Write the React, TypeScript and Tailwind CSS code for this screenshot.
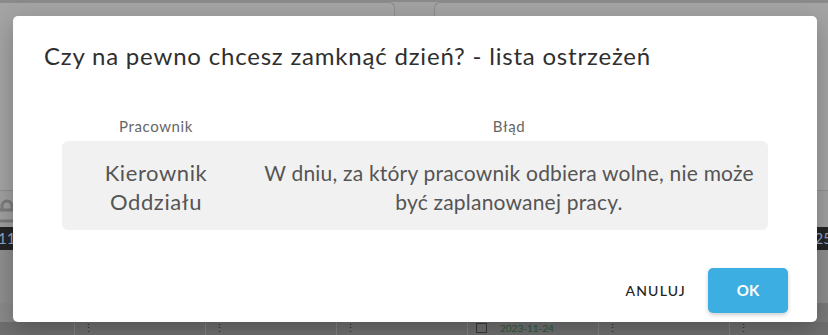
import { Lock } from "lucide-react";

const columns = ["Pracownik", "Błąd"];

const warnings = [
  {
    id: "w1",
    employee: "Kierownik Oddziału",
    message: "W dniu, za który pracownik odbiera wolne, nie może być zaplanowanej pracy.",
  },
];

function Backdrop() {
  return (
    <div className="flex h-full flex-col">
      <div className="h-[2px] bg-[#8a8a8a]" />
      <div className="flex h-[188px]">
        <div className="w-[395px] rounded-tr-[6px] border-r border-t border-[#8c8c8c] bg-[#a4a4a4]" />
        <div className="ml-[39px] flex-1 rounded-tl-[6px] border-l border-t border-[#8c8c8c] bg-[#a4a4a4]" />
      </div>
      <div className="h-[37px] border-t border-[#8e8e8e] bg-[#a0a0a0] pt-[8px]">
        <Lock className="ml-[-5px] h-[24px] w-[24px] text-[#7c7c7c]" strokeWidth={3} />
      </div>
      <div className="flex h-[23px] items-center justify-between bg-[#242424] text-[15px] text-[#8fa6c8]">
        <span className="ml-[-2px]">11</span>
        <span className="mr-[-4px]">25</span>
      </div>
      <div className="h-[53px] bg-[#8e8e8e]" />
      <div className="h-[19px] bg-gradient-to-r from-[#8a8a8a] via-[#7c7c7c] to-[#7a7a7a]" />
      <div className="flex h-[13px] bg-[#707070] pl-[74px]">
        {[0, 1, 2, 3, 4, 5].map((i) => (
          <div
            key={i}
            className="flex w-[131px] shrink-0 items-start border-l border-[#838383] pl-[8px] text-[11px] leading-[12px] text-[#2a2a2a]"
          >
            {i === 3 ? (
              <span className="flex items-center gap-[13px]">
                <span className="h-[10px] w-[11px] border border-[#3a3a3a]" />
                <span className="text-[10px] text-[#2f5a3a]">2023-11-24</span>
              </span>
            ) : (
              <span>⋮</span>
            )}
          </div>
        ))}
      </div>
    </div>
  );
}

export default function App() {
  return (
    <div className="relative h-[335px] w-[828px] overflow-hidden bg-[#a2a2a2] font-['Lato',sans-serif]">
      <Backdrop />

      <div className="absolute left-[13px] top-[16px] flex h-[306px] w-[804px] flex-col rounded-[5px] bg-white shadow-[0_8px_24px_rgba(0,0,0,0.25)]">
        <h2 className="pl-[31px] pt-[27px] text-[24px] leading-[26px] tracking-[0.8px] text-[#2f2f2f]">
          Czy na pewno chcesz zamknąć dzień? - lista ostrzeżeń
        </h2>

        <div className="mx-[49px] mt-[47px]">
          <div className="grid grid-cols-[188px_1fr] text-center text-[15px] leading-[20px] tracking-[0.6px] text-[#666]">
            {columns.map((col) => (
              <span key={col}>{col}</span>
            ))}
          </div>

          {warnings.map((w) => (
            <div
              key={w.id}
              className="mt-[5px] grid grid-cols-[188px_1fr] rounded-[6px] bg-[#f1f1f1] text-center leading-[29px] text-[#555]"
            >
              <div className="px-[20px] pb-[14px] pt-[17px] text-[22px] tracking-[0.6px]">{w.employee}</div>
              <div className="px-[9px] pb-[14px] pt-[17px] text-[21px] tracking-[0.2px]">{w.message}</div>
            </div>
          ))}
        </div>

        <div className="mt-auto flex items-center justify-end gap-[14px] pb-[9px] pr-[29px]">
          <button
            type="button"
            className="px-[8px] py-[6px] text-[14px] font-medium uppercase tracking-[1.2px] text-[#222]"
          >
            Anuluj
          </button>
          <button
            type="button"
            className="h-[45px] w-[80px] rounded-[5px] bg-[#3daee1] text-[15px] font-bold text-white shadow-[0_2px_4px_rgba(0,0,0,0.2)]"
          >
            OK
          </button>
        </div>
      </div>
    </div>
  );
}
